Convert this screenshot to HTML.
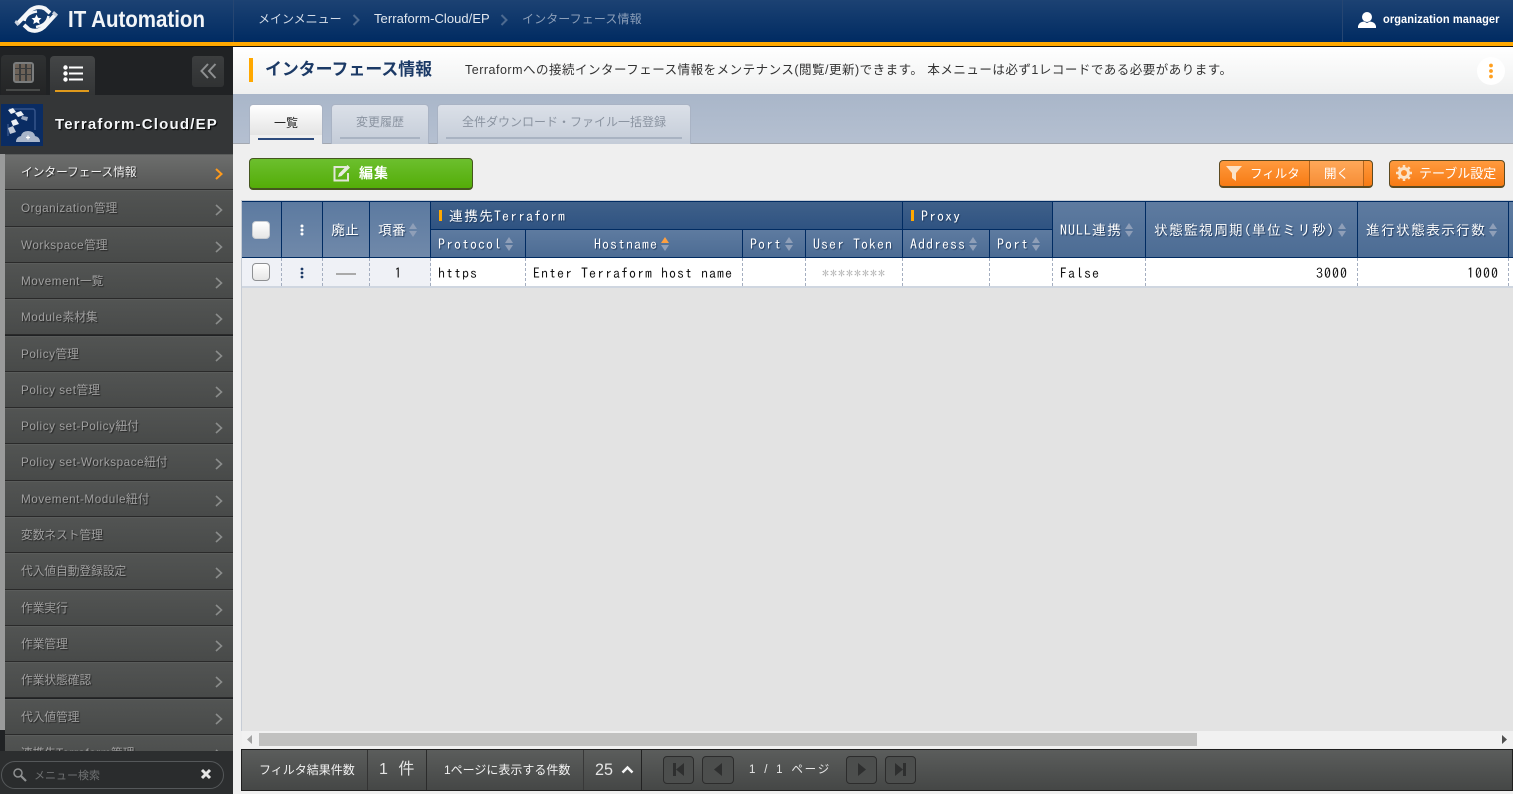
<!DOCTYPE html>
<html lang="ja"><head><meta charset="utf-8"><title>インターフェース情報</title>
<style>
*{box-sizing:border-box}
html,body{margin:0;padding:0;width:1513px;height:794px;overflow:hidden;background:#fff;font-family:"Liberation Sans","Noto Sans CJK JP",sans-serif}
.a{position:absolute}
.t{position:absolute;white-space:nowrap;line-height:20px}
#hd{left:0;top:0;width:1513px;height:42px;background:linear-gradient(#1c4273,#002b62)}
.crumb{color:#d3dce8;font-size:12px;top:9px}
.mi{left:5px;width:228px;height:36.3px;background:linear-gradient(#525453,#484a49);border-top:1px solid #5a5c5b;border-bottom:1px solid #2a2a2a;color:#a0a0a0;font-size:11.7px;line-height:36px;padding-left:16px;text-shadow:1px 1px 1px #222;white-space:nowrap;overflow:hidden}
.mi b{font-weight:normal;letter-spacing:.55px}
.mi svg{position:absolute;right:10px;top:13px}
.th{position:absolute;border-right:1px solid #002b62;border-bottom:1px solid #002b62;color:#fff;font-family:"IPAGothic","Liberation Mono",monospace;font-size:14px;letter-spacing:1px;white-space:nowrap;text-shadow:1px 1px 1px #203a5e;display:flex;align-items:center;justify-content:flex-start;padding-left:7px}
.g1{background:linear-gradient(#3f6089,#2f5382)}
.g2{background:linear-gradient(#5e7ba0,#4c6c94)}
.g3{background:linear-gradient(#5c7aa0,#7089aa)}
.td{position:absolute;top:258px;height:28px;border-right:1px dashed #a4aec0;background:#fff;font-family:"IPAGothic","Liberation Mono",monospace;font-size:14px;letter-spacing:1px;color:#111;line-height:30px;white-space:nowrap;padding:0 7px}
.s{display:inline-block;width:8px;height:14px;margin-left:3px;flex:none}
.tab{position:absolute;top:104px;height:40px;border:1px solid #a9b3c4;border-bottom:none;border-radius:4px 4px 0 0;background:linear-gradient(#dbe0e8,#c4ccd8);color:#8a93a0;font-size:12px;text-align:center;line-height:34px}
.tab i{position:absolute;left:8px;right:8px;bottom:5px;height:2px;background:#a9b3c2}
.btn{position:absolute;border:1px solid #5c4a22;border-bottom-width:2px;border-radius:4px;color:#fff;font-size:12px;background:linear-gradient(#ff9a3e,#f77b14)}
.pb{position:absolute;top:756px;width:24px;height:28px;border:1px solid #2c2c2c;border-radius:4px;background:#4c4e4d}
</style></head><body>
<!-- header -->
<div class="a" id="hd"></div>
<div class="a" style="left:0;top:42px;width:1513px;height:4px;background:#ffa800"></div>
<div class="a" style="left:0;top:46px;width:1513px;height:1px;background:#111"></div>
<svg class="a" style="left:0;top:0" width="62" height="40" viewBox="0 0 62 40"><g fill="none" stroke="#f4f6f8" stroke-linecap="butt"><path d="M18 23 30 10.500Q37 5 45 8.500L50 13" stroke-width="4"/><path d="M56 14 44 27Q37 33 29 29.500L24 25" stroke-width="4"/><path d="M24.500 21Q26 13 37 11.500" stroke-width="2.500"/><path d="M48.500 16Q47 25 36 27" stroke-width="2.500"/></g><path d="M16 20 20 24 17.500 26 14.500 22.500Z" fill="#c8d0dc"/><path d="M54 11 58 14.500 56 17 52 13.500Z" fill="#c8d0dc"/><path d="M36.500 14.500 38 17.800 41.500 18.200 39 20.500 39.700 24 36.500 22.200 33.300 24 34 20.500 31.500 18.200 35 17.800Z" fill="#fff"/></svg>
<div class="t" style="left:68px;top:9px;color:#f2f5f8;font-size:23.500px;font-weight:bold;transform:scaleX(.872);transform-origin:0 0">IT Automation</div>
<div class="a" style="left:233px;top:0;width:1px;height:42px;background:#264672"></div>
<div class="t crumb" style="left:258px">メインメニュー</div>
<svg class="a" style="left:352px;top:14px" width="8" height="12" viewBox="0 0 8 12" fill="none" stroke="#4d6a90" stroke-width="2"><path d="M1.500 1 6.500 6 1.500 11"/></svg>
<div class="t crumb" style="left:374px;font-size:13px;color:#e2e8ef;letter-spacing:.05px">Terraform-Cloud/EP</div>
<svg class="a" style="left:500px;top:14px" width="8" height="12" viewBox="0 0 8 12" fill="none" stroke="#4d6a90" stroke-width="2"><path d="M1.500 1 6.500 6 1.500 11"/></svg>
<div class="t crumb" style="left:522px;color:#8c9fb9;letter-spacing:.1px">インターフェース情報</div>
<div class="a" style="left:1342px;top:0;width:1px;height:42px;background:#264672"></div>
<svg class="a" style="left:1358px;top:11px" width="18" height="18" viewBox="0 0 18 18" fill="#fff"><circle cx="9" cy="6" r="5"/><path d="M0 17V15Q1 11 6 10.500L9 12 12 10.500Q17 11 18 15V17Z"/></svg>
<div class="t" style="left:1383px;top:9px;color:#fff;font-size:12px;font-weight:bold;transform:scaleX(.92);transform-origin:0 0;letter-spacing:.1px">organization manager</div>

<!-- sidebar -->
<div class="a" style="left:0;top:47px;width:233px;height:747px;background:#202224"></div>
<div class="a" style="left:1px;top:55px;width:45px;height:40px;background:linear-gradient(#2f3132,#232425);border-radius:4px 4px 0 0"></div>
<div class="a" style="left:6px;top:89px;width:34px;height:2px;background:#474948"></div>
<div class="a" style="left:13px;top:62px;width:21px;height:21px;border:2px solid #7b7d7e;border-radius:3px;background:repeating-linear-gradient(90deg,#6d6258 0 4px,#3a3c3d 4px 6px)"></div>
<div class="a" style="left:15px;top:68px;width:17px;height:1px;background:#3a3c3d"></div>
<div class="a" style="left:15px;top:74px;width:17px;height:1px;background:#3a3c3d"></div>
<div class="a" style="left:50px;top:56px;width:45px;height:39px;background:linear-gradient(#444647,#333536);border-radius:4px 4px 0 0"></div>
<svg class="a" style="left:63px;top:65px" width="20" height="17" viewBox="0 0 20 17" fill="#fff"><circle cx="2.500" cy="2.500" r="2.200"/><circle cx="2.500" cy="8.500" r="2.200"/><circle cx="2.500" cy="14.500" r="2.200"/><rect x="6" y="1.500" width="14" height="2"/><rect x="6" y="7.500" width="14" height="2"/><rect x="6" y="13.500" width="14" height="2"/></svg>
<div class="a" style="left:55px;top:90px;width:34px;height:2px;background:#e09a1c"></div>
<div class="a" style="left:192px;top:56px;width:32px;height:31px;border-radius:3px;background:linear-gradient(#3c3e3f,#303233)"></div>
<svg class="a" style="left:200px;top:63px" width="17" height="16" viewBox="0 0 17 16" fill="none" stroke="#8e9091" stroke-width="2"><path d="M8 1 1.500 8 8 15M15.500 1 9 8 15.500 15"/></svg>

<div class="a" style="left:0;top:95px;width:233px;height:59px;background:#343637"></div>
<svg class="a" style="left:1px;top:104px" width="42" height="42" viewBox="0 0 42 42"><rect width="42" height="42" fill="#0a2c63"/><path d="M8 5H32Q34 5 34 8V26M7 20V32" stroke="#35548a" fill="none" stroke-width="1.500"/><g fill="#eef1f5"><path d="M7 6 12 4 15 8 10 10Z"/><path d="M14 9 20 7 23 11 17 13Z"/><path d="M10 17 15 15 18 20 12 22Z"/></g><path d="M21 12 27 13 26 17 20 15Z" fill="#9aa8c0"/><path d="M7 24 12 22 15 28 9 30Z" fill="#c2cad8"/><path d="M15 38Q15 33 20 32 21 27 27 27 33 27 34 32 39 33 39 38Z" fill="#a9b6ca"/><path d="M27 31.500V35.500M25 33.500H29" stroke="#fff" stroke-width="1.200"/></svg>
<div class="t" style="left:55px;top:115px;color:#f4f6f8;font-size:15px;font-weight:bold;letter-spacing:1.2px;text-shadow:1px 1px 1px #000;">Terraform-Cloud/EP</div>

<div class="a" style="left:0;top:154px;width:5px;height:576px;background:#9a9b9b"></div>
<div class="a mi" style="top:154px;background:linear-gradient(#6d6e6d,#565756);color:#f2f2f2">インターフェース情報<svg width="8" height="12" viewBox="0 0 8 12" fill="none" stroke="#ff9a1c" stroke-width="2"><path d="M1 1 6.500 6 1 11"/></svg></div>
<div class="a mi" style="top:190.300px"><b>Organization</b>管理<svg width="8" height="12" viewBox="0 0 8 12" fill="none" stroke="#8b8d8c" stroke-width="1.600"><path d="M1 1 6.500 6 1 11"/></svg></div>
<div class="a mi" style="top:226.600px"><b>Workspace</b>管理<svg width="8" height="12" viewBox="0 0 8 12" fill="none" stroke="#8b8d8c" stroke-width="1.600"><path d="M1 1 6.500 6 1 11"/></svg></div>
<div class="a mi" style="top:262.900px"><b>Movement</b>一覧<svg width="8" height="12" viewBox="0 0 8 12" fill="none" stroke="#8b8d8c" stroke-width="1.600"><path d="M1 1 6.500 6 1 11"/></svg></div>
<div class="a mi" style="top:299.200px"><b>Module</b>素材集<svg width="8" height="12" viewBox="0 0 8 12" fill="none" stroke="#8b8d8c" stroke-width="1.600"><path d="M1 1 6.500 6 1 11"/></svg></div>
<div class="a mi" style="top:335.500px"><b>Policy</b>管理<svg width="8" height="12" viewBox="0 0 8 12" fill="none" stroke="#8b8d8c" stroke-width="1.600"><path d="M1 1 6.500 6 1 11"/></svg></div>
<div class="a mi" style="top:371.800px"><b>Policy set</b>管理<svg width="8" height="12" viewBox="0 0 8 12" fill="none" stroke="#8b8d8c" stroke-width="1.600"><path d="M1 1 6.500 6 1 11"/></svg></div>
<div class="a mi" style="top:408.100px"><b>Policy set-Policy</b>紐付<svg width="8" height="12" viewBox="0 0 8 12" fill="none" stroke="#8b8d8c" stroke-width="1.600"><path d="M1 1 6.500 6 1 11"/></svg></div>
<div class="a mi" style="top:444.400px"><b>Policy set-Workspace</b>紐付<svg width="8" height="12" viewBox="0 0 8 12" fill="none" stroke="#8b8d8c" stroke-width="1.600"><path d="M1 1 6.500 6 1 11"/></svg></div>
<div class="a mi" style="top:480.700px"><b>Movement-Module</b>紐付<svg width="8" height="12" viewBox="0 0 8 12" fill="none" stroke="#8b8d8c" stroke-width="1.600"><path d="M1 1 6.500 6 1 11"/></svg></div>
<div class="a mi" style="top:517px">変数ネスト管理<svg width="8" height="12" viewBox="0 0 8 12" fill="none" stroke="#8b8d8c" stroke-width="1.600"><path d="M1 1 6.500 6 1 11"/></svg></div>
<div class="a mi" style="top:553.300px">代入値自動登録設定<svg width="8" height="12" viewBox="0 0 8 12" fill="none" stroke="#8b8d8c" stroke-width="1.600"><path d="M1 1 6.500 6 1 11"/></svg></div>
<div class="a mi" style="top:589.600px">作業実行<svg width="8" height="12" viewBox="0 0 8 12" fill="none" stroke="#8b8d8c" stroke-width="1.600"><path d="M1 1 6.500 6 1 11"/></svg></div>
<div class="a mi" style="top:625.900px">作業管理<svg width="8" height="12" viewBox="0 0 8 12" fill="none" stroke="#8b8d8c" stroke-width="1.600"><path d="M1 1 6.500 6 1 11"/></svg></div>
<div class="a mi" style="top:662.200px">作業状態確認<svg width="8" height="12" viewBox="0 0 8 12" fill="none" stroke="#8b8d8c" stroke-width="1.600"><path d="M1 1 6.500 6 1 11"/></svg></div>
<div class="a mi" style="top:698.500px">代入値管理<svg width="8" height="12" viewBox="0 0 8 12" fill="none" stroke="#8b8d8c" stroke-width="1.600"><path d="M1 1 6.500 6 1 11"/></svg></div>
<div class="a mi" style="top:734.800px">連携先<b>Terraform</b>管理<svg width="8" height="12" viewBox="0 0 8 12" fill="none" stroke="#8b8d8c" stroke-width="1.600"><path d="M1 1 6.500 6 1 11"/></svg></div>

<div class="a" style="left:0;top:751px;width:233px;height:43px;background:#2c2e2f"></div>
<div class="a" style="left:1px;top:761px;width:223px;height:28px;border:1px solid #55585a;border-radius:14px;background:#2a2c2d"></div>
<svg class="a" style="left:12px;top:767px" width="16" height="16" viewBox="0 0 16 16" fill="none" stroke="#8e9091"><circle cx="6" cy="6" r="4" stroke-width="1.500"/><path d="M9 9 14 14" stroke-width="2.200"/></svg>
<div class="t" style="left:34px;top:766px;color:#6f7172;font-size:11px">メニュー検索</div>
<svg class="a" style="left:200px;top:768px" width="12" height="12" viewBox="0 0 12 12" stroke="#e6e6e6" stroke-width="3"><path d="M2 2 10 10M10 2 2 10"/></svg>

<!-- title bar -->
<div class="a" style="left:233px;top:47px;width:1280px;height:47px;background:linear-gradient(#fff,#eff0f0)"></div>
<div class="a" style="left:249px;top:58px;width:4px;height:24px;background:#ffa800"></div>
<div class="t" style="left:265px;top:60px;color:#1c3a66;font-size:16.900px;font-weight:bold">インターフェース情報</div>
<div class="t" style="left:465px;top:60px;color:#333;font-size:12.500px;letter-spacing:.5px">Terraformへの接続インターフェース情報をメンテナンス(閲覧/更新)できます。 本メニューは必ず1レコードである必要があります。</div>
<div class="a" style="left:1477px;top:57px;width:28px;height:28px;border-radius:50%;background:#fff"></div>
<svg class="a" style="left:1487px;top:63px" width="8" height="16" viewBox="0 0 8 16" fill="#ffa020"><circle cx="4" cy="2.500" r="1.900"/><circle cx="4" cy="8" r="1.900"/><circle cx="4" cy="13.500" r="1.900"/></svg>

<!-- tabs -->
<div class="a" style="left:233px;top:94px;width:1280px;height:50px;background:linear-gradient(#a9b6c9,#b5c0d1)"></div>
<div class="a" style="left:233px;top:143px;width:1280px;height:1px;background:#a3a8b0"></div>
<div class="tab" style="left:249px;width:74px;top:104px;height:41px;background:linear-gradient(#fff,#e4e4e4 75%,#efefef 75%);color:#222;line-height:36px">一覧<i style="background:#2c4a7c"></i></div>
<div class="tab" style="left:331px;width:98px">変更履歴<i></i></div>
<div class="tab" style="left:437px;width:254px">全件ダウンロード・ファイル一括登録<i></i></div>

<!-- content -->
<div class="a" style="left:233px;top:144px;width:1280px;height:650px;background:#efefef"></div>
<div class="a" style="left:249px;top:158px;width:224px;height:32px;border:1px solid #45561f;border-bottom-width:2px;border-radius:4px;background:linear-gradient(#6cbf2e,#54ad08)"></div>
<svg class="a" style="left:333px;top:164px" width="18" height="18" viewBox="0 0 18 18" fill="none"><path d="M13 3H1.500V16.500H15V9" stroke="#e2e6d8" stroke-width="2"/><path d="M5 13 6 9.500 14.500 1 17 3.500 8.500 12Z" fill="#e8ecdf"/></svg>
<div class="t" style="left:359px;top:163px;color:#fff;font-size:14px;letter-spacing:1px;font-weight:bold">編集</div>

<div class="btn" style="left:1219px;top:160px;width:154px;height:28px"></div>
<div class="a" style="left:1309px;top:161px;width:55px;height:25px;background:rgba(255,255,255,.14);border-left:1px solid #b5641a;border-right:1px solid #b5641a"></div>
<svg class="a" style="left:1226px;top:166px" width="16" height="15" viewBox="0 0 16 15" fill="#fbe3c8"><path d="M0 0H16L10 7V15L6 12V7Z"/></svg>
<div class="t" style="left:1250px;top:164px;color:#fff;font-size:12.500px">フィルタ</div>
<div class="t" style="left:1324px;top:164px;color:#fff;font-size:12.500px">開く</div>
<div class="btn" style="left:1389px;top:160px;width:116px;height:28px"></div>
<svg class="a" style="left:1396px;top:165px" width="16" height="16" viewBox="0 0 16 16"><circle cx="8" cy="8" r="4.500" fill="none" stroke="#fbe3c8" stroke-width="3"/><path d="M8 0V16M0 8H16M2.300 2.300 13.700 13.700M13.700 2.300 2.300 13.700" stroke="#fbe3c8" stroke-width="2.500" stroke-dasharray="2.500 11 2.500 0"/></svg>
<div class="t" style="left:1419px;top:164px;color:#fff;font-size:13px">テーブル設定</div>

<!-- table -->
<div class="a" style="left:241px;top:200px;width:1272px;height:531px;background:#e3e3e3;border-left:1px solid #c6ccd5;border-top:1px solid #c6ccd5"></div>
<div class="a" style="left:242px;top:201px;width:1271px;height:1px;background:#002b62"></div>

<div class="th g3" style="left:242px;top:202px;width:40px;height:56px"></div>
<div class="a" style="left:252px;top:221px;width:18px;height:18px;border-radius:4px;border:1px solid #c8ccd2;background:linear-gradient(#fff,#e6e6e6)"></div>
<div class="th g3" style="left:282px;top:202px;width:41px;height:56px;padding-left:18px"><svg width="4" height="12" viewBox="0 0 4 12" fill="#fff"><circle cx="2" cy="2" r="1.500"/><circle cx="2" cy="6" r="1.500"/><circle cx="2" cy="10" r="1.500"/></svg></div>
<div class="th g3" style="left:323px;top:202px;width:47px;height:56px;letter-spacing:0;padding-left:8px">廃止</div>
<div class="th g3" style="left:370px;top:202px;width:61px;height:56px;letter-spacing:0;padding-left:8px">項番<svg class="s" viewBox="0 0 8 14"><path d="M4 0 8 6H0Z" fill="#8f9fb8"/><path d="M4 14 8 8H0Z" fill="#8f9fb8"/></svg></div>

<div class="th g1" style="left:431px;top:202px;width:472px;height:28px;padding-left:8px"><span style="display:inline-block;width:3px;height:11px;background:#ffa800;margin-right:7px"></span>連携先Terraform</div>
<div class="th g1" style="left:903px;top:202px;width:150px;height:28px;padding-left:8px"><span style="display:inline-block;width:3px;height:11px;background:#ffa800;margin-right:7px"></span>Proxy</div>

<div class="th g2" style="left:431px;top:230px;width:95px;height:28px">Protocol<svg class="s" viewBox="0 0 8 14"><path d="M4 0 8 6H0Z" fill="#8f9fb8"/><path d="M4 14 8 8H0Z" fill="#8f9fb8"/></svg></div>
<div class="th g2" style="left:526px;top:230px;width:217px;height:28px;padding-left:68px">Hostname<svg class="s" viewBox="0 0 8 14"><path d="M4 0 8 6H0Z" fill="#ffa040"/><path d="M4 14 8 8H0Z" fill="#8f9fb8"/></svg></div>
<div class="th g2" style="left:743px;top:230px;width:63px;height:28px">Port<svg class="s" viewBox="0 0 8 14"><path d="M4 0 8 6H0Z" fill="#8f9fb8"/><path d="M4 14 8 8H0Z" fill="#8f9fb8"/></svg></div>
<div class="th g2" style="left:806px;top:230px;width:97px;height:28px">User Token</div>
<div class="th g2" style="left:903px;top:230px;width:87px;height:28px">Address<svg class="s" viewBox="0 0 8 14"><path d="M4 0 8 6H0Z" fill="#8f9fb8"/><path d="M4 14 8 8H0Z" fill="#8f9fb8"/></svg></div>
<div class="th g2" style="left:990px;top:230px;width:63px;height:28px">Port<svg class="s" viewBox="0 0 8 14"><path d="M4 0 8 6H0Z" fill="#8f9fb8"/><path d="M4 14 8 8H0Z" fill="#8f9fb8"/></svg></div>

<div class="th g2" style="left:1053px;top:202px;width:93px;height:56px">NULL連携<svg class="s" viewBox="0 0 8 14"><path d="M4 0 8 6H0Z" fill="#8f9fb8"/><path d="M4 14 8 8H0Z" fill="#8f9fb8"/></svg></div>
<div class="th g2" style="left:1146px;top:202px;width:212px;height:56px;padding-left:8px">状態監視周期(単位ミリ秒)<svg class="s" viewBox="0 0 8 14"><path d="M4 0 8 6H0Z" fill="#8f9fb8"/><path d="M4 14 8 8H0Z" fill="#8f9fb8"/></svg></div>
<div class="th g2" style="left:1358px;top:202px;width:151px;height:56px;padding-left:8px">進行状態表示行数<svg class="s" viewBox="0 0 8 14"><path d="M4 0 8 6H0Z" fill="#8f9fb8"/><path d="M4 14 8 8H0Z" fill="#8f9fb8"/></svg></div>
<div class="th g2" style="left:1509px;top:202px;width:4px;height:56px;border-right:0;padding:0"></div>

<div class="td" style="left:242px;width:40px;background:#eff1f6"></div>
<div class="a" style="left:252px;top:263px;width:18px;height:18px;border-radius:4px;border:1px solid #8e9093;background:linear-gradient(#fff,#e6e6e6)"></div>
<div class="td" style="left:282px;width:41px;background:#eff1f6"></div>
<svg class="a" style="left:300px;top:267px" width="4" height="12" viewBox="0 0 4 12" fill="#1c3a66"><circle cx="2" cy="2" r="1.400"/><circle cx="2" cy="6" r="1.400"/><circle cx="2" cy="10" r="1.400"/></svg>
<div class="td" style="left:323px;width:47px;background:#eff1f6"></div>
<div class="a" style="left:336px;top:273px;width:20px;height:2px;background:#aaa"></div>
<div class="td" style="left:370px;width:61px;background:#eff1f6;text-align:center;padding:0 3px 0 0">1</div>
<div class="td" style="left:431px;width:95px">https</div>
<div class="td" style="left:526px;width:217px">Enter Terraform host name</div>
<div class="td" style="left:743px;width:63px"></div>
<div class="td" style="left:806px;width:97px;color:#b5b5b5;text-align:center;padding:0">********</div>
<div class="td" style="left:903px;width:87px"></div>
<div class="td" style="left:990px;width:63px"></div>
<div class="td" style="left:1053px;width:93px">False</div>
<div class="td" style="left:1146px;width:212px;text-align:right;padding-right:9px">3000</div>
<div class="td" style="left:1358px;width:151px;text-align:right;padding-right:9px">1000</div>
<div class="td" style="left:1509px;width:4px;border:0;padding:0"></div>
<div class="a" style="left:242px;top:286px;width:1271px;height:2px;background:#cfd6e0"></div>

<!-- scrollbar -->
<div class="a" style="left:242px;top:731px;width:1271px;height:17px;background:#f1f1f1"></div>
<div class="a" style="left:259px;top:733px;width:938px;height:13px;background:#c1c1c0"></div>
<svg class="a" style="left:247px;top:735px" width="6" height="9" viewBox="0 0 6 9"><path d="M5 0V9L0 4.500Z" fill="#a3a3a3"/></svg>
<svg class="a" style="left:1501px;top:735px" width="6" height="9" viewBox="0 0 6 9"><path d="M1 0V9L6 4.500Z" fill="#505050"/></svg>

<!-- footer -->
<div class="a" style="left:241px;top:749px;width:1272px;height:42px;border:1px solid #1f1f1f;background:linear-gradient(#5b5d5c,#454746)"></div>
<div class="a" style="left:367px;top:750px;width:1px;height:40px;background:#333"></div>
<div class="a" style="left:426px;top:750px;width:1px;height:40px;background:#2b2b2b"></div>
<div class="a" style="left:583px;top:750px;width:1px;height:40px;background:#383838"></div>
<div class="a" style="left:641px;top:750px;width:1px;height:40px;background:#222"></div>
<div class="t" style="left:259px;top:760px;color:#f2f2f2;font-size:12px;">フィルタ結果件数</div>
<div class="t" style="left:379px;top:760px;color:#e4e4e4;font-size:16px;letter-spacing:3px;font-weight:normal">1 件</div>
<div class="t" style="left:444px;top:760px;color:#f2f2f2;font-size:12px">1ページに表示する件数</div>
<div class="t" style="left:595px;top:760px;color:#e4e4e4;font-size:17px;transform:scaleX(.95);transform-origin:0 0">25</div>
<svg class="a" style="left:621px;top:765px" width="13" height="9" viewBox="0 0 13 9" fill="none" stroke="#f4f4f4" stroke-width="2.500"><path d="M1.500 7.500 6.500 2.500 11.500 7.500"/></svg>
<div class="pb" style="left:663px;width:31px"></div>
<svg class="a" style="left:672px;top:762px" width="13" height="15" viewBox="0 0 13 15" fill="#2e2f2f"><rect x="1" y="1" width="3" height="13"/><path d="M12 1V14L4 7.500Z"/></svg>
<div class="pb" style="left:702px;width:32px"></div>
<svg class="a" style="left:713px;top:762px" width="10" height="15" viewBox="0 0 10 15" fill="#2e2f2f"><path d="M9 1V14L1 7.500Z"/></svg>
<div class="t" style="left:749px;top:760px;color:#e8e8e8;font-size:11.500px;letter-spacing:1.800px;word-spacing:2px">1 / 1 ページ</div>
<div class="pb" style="left:846px;width:31px"></div>
<svg class="a" style="left:857px;top:762px" width="10" height="15" viewBox="0 0 10 15" fill="#2e2f2f"><path d="M1 1V14L9 7.500Z"/></svg>
<div class="pb" style="left:885px;width:31px"></div>
<svg class="a" style="left:894px;top:762px" width="13" height="15" viewBox="0 0 13 15" fill="#2e2f2f"><path d="M1 1V14L9 7.500Z"/><rect x="9" y="1" width="3" height="13"/></svg>
</body></html>
